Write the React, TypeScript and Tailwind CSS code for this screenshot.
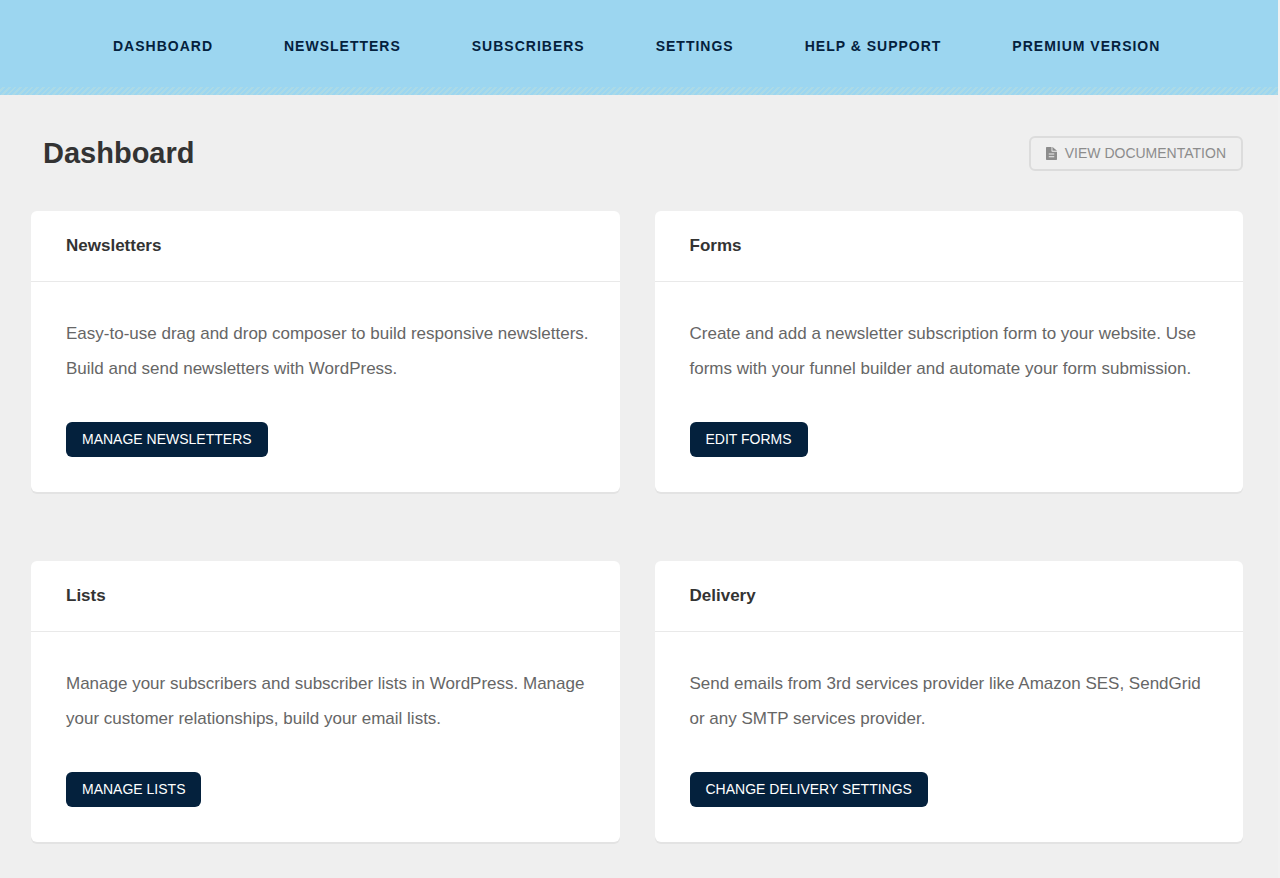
const navItems = [
  'Dashboard',
  'Newsletters',
  'Subscribers',
  'Settings',
  'Help & Support',
  'Premium Version',
];

const cards = [
  {
    title: 'Newsletters',
    text: 'Easy-to-use drag and drop composer to build responsive newsletters. Build and send newsletters with WordPress.',
    action: 'Manage Newsletters',
  },
  {
    title: 'Forms',
    text: 'Create and add a newsletter subscription form to your website. Use forms with your funnel builder and automate your form submission.',
    action: 'Edit Forms',
  },
  {
    title: 'Lists',
    text: 'Manage your subscribers and subscriber lists in WordPress. Manage your customer relationships, build your email lists.',
    action: 'Manage Lists',
  },
  {
    title: 'Delivery',
    text: 'Send emails from 3rd services provider like Amazon SES, SendGrid or any SMTP services provider.',
    action: 'Change Delivery Settings',
  },
];

function FileIcon() {
  return (
    <svg viewBox="0 0 12 14" className="h-[13px] w-[11px]" fill="currentColor" aria-hidden="true">
      <path
        fillRule="evenodd"
        d="M0 .7C0 .3.3 0 .7 0H6v4.3c0 .4.3.7.7.7H12v8.3c0 .4-.3.7-.7.7H.7c-.4 0-.7-.3-.7-.7V.7ZM3 7v1h6V7H3Zm0 3v1h6v-1H3Z"
      />
      <path d="M7 0c.3 0 .5.2.8.4l3.6 3c.3.2.5.4.6.7H7V0Z" />
    </svg>
  );
}

function Card({ title, text, action }: { title: string; text: string; action: string }) {
  return (
    <section className="rounded-md bg-white shadow-[0_2px_0_#e3e3e3]">
      <h2 className="border-b border-[#e9e9e9] px-[35px] py-[23px] text-[17px] leading-6 font-bold">
        {title}
      </h2>
      <div className="pt-[34px] pr-7 pb-[35px] pl-[35px]">
        <p className="text-[17px] leading-[35px] text-[#666]">{text}</p>
        <button
          type="button"
          className="mt-9 block h-[35px] rounded-md bg-[#04213d] px-4 pb-0.5 text-sm text-white uppercase"
        >
          {action}
        </button>
      </div>
    </section>
  );
}

export default function App() {
  return (
    <div className="min-h-screen border-r-2 border-[#f1f1f1] bg-[#efefef] font-['Liberation_Sans',Arial,sans-serif] text-[#333]">
      <header className="bg-[#9cd6f0]">
        <nav className="flex h-[87px] items-center gap-[71px] pt-1 pl-[113px]">
          {navItems.map((item) => (
            <a
              key={item}
              href="#"
              className="text-sm font-bold tracking-[1px] whitespace-nowrap text-[#04213d] uppercase"
            >
              {item}
            </a>
          ))}
        </nav>
        <div className="h-2 bg-[repeating-linear-gradient(135deg,#9cd6f0_0px,#9cd6f0_2px,#abdae7_2px,#abdae7_4px)]" />
      </header>
      <main className="pr-[35px] pb-[35px] pl-[31px]">
        <div className="flex h-[116px] items-center justify-between pl-3">
          <h1 className="text-[29px] leading-9 font-bold">Dashboard</h1>
          <a
            href="#"
            className="flex h-[35px] items-center gap-2 rounded-md border-2 border-[#dcdcdc] px-[15px] text-sm text-[#8c8c8c] uppercase"
          >
            <FileIcon />
            View Documentation
          </a>
        </div>
        <div className="grid grid-cols-2 gap-x-[35px] gap-y-[69px]">
          {cards.map((card) => (
            <Card key={card.title} {...card} />
          ))}
        </div>
      </main>
    </div>
  );
}
